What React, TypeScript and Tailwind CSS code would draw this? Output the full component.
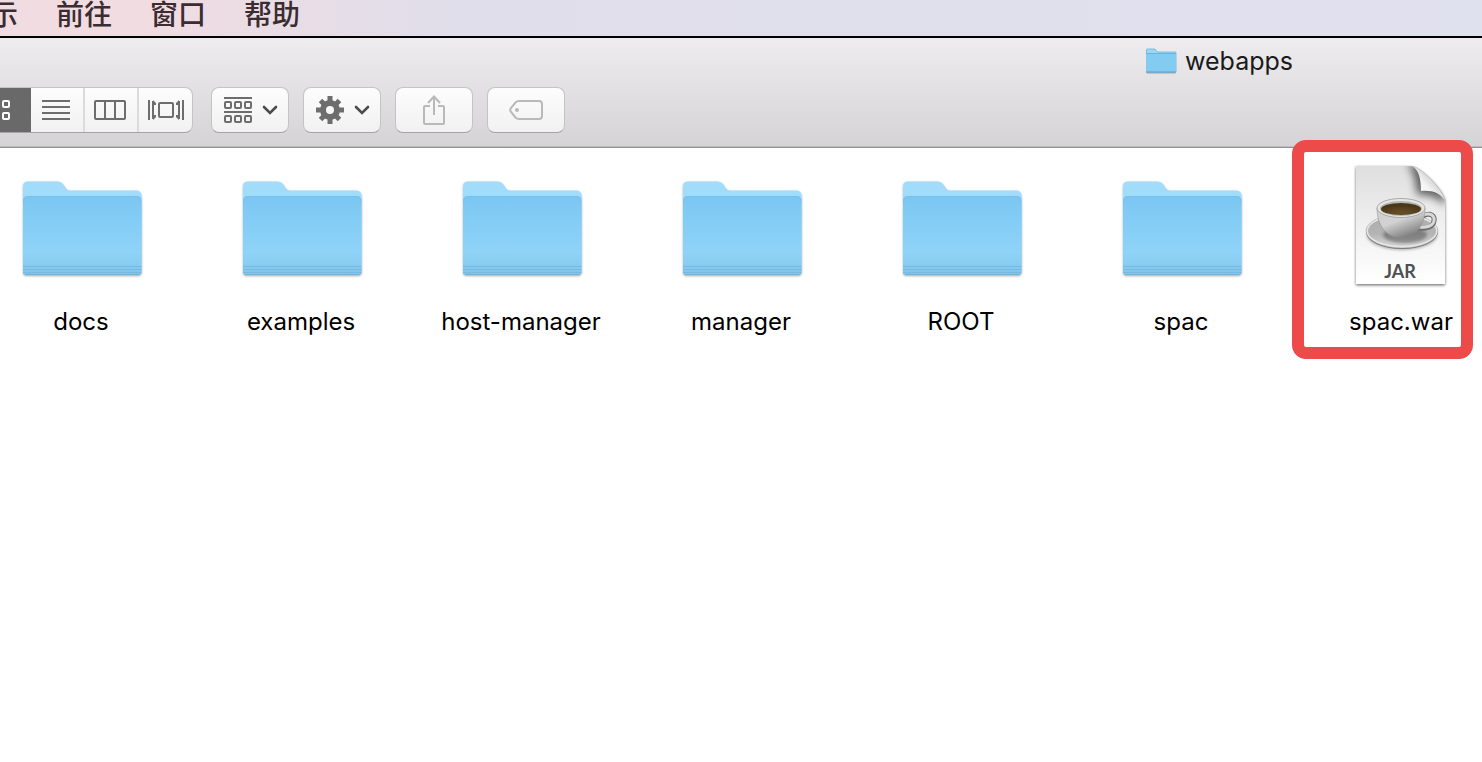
import React from 'react';

const FolderIcon = () => (
  <svg viewBox="0 0 128 128" className="w-32 h-32 drop-shadow-[0_1px_1px_rgba(0,0,0,0.3)]" aria-hidden="true">
    <defs>
      <linearGradient id="folder-front" x1="0" y1="0" x2="0" y2="1">
        <stop offset="0" stopColor="#7bc6f2" />
        <stop offset="0.35" stopColor="#84cdf6" />
        <stop offset="0.7" stopColor="#8fd3f7" />
        <stop offset="0.85" stopColor="#89cdf1" />
        <stop offset="1" stopColor="#7fc3e9" />
      </linearGradient>
    </defs>
    <path d="M6 109V24.500Q6 19.500 11 19.500H41Q44 19.500 46 22L49 26.500Q50.500 28.500 53 28.500H119Q124.500 28.500 124.500 34V109Z" fill="#a1dcfb" />
    <path d="M6 39Q6 34 11 34H119.500Q124.500 34 124.500 39V110Q124.500 113 121.500 113H9Q6 113 6 110Z" fill="url(#folder-front)" />
    <path d="M6.500 39.500Q6.500 34.500 11 34.500H119.500Q124 34.500 124 39.500" fill="none" stroke="#72bde6" strokeWidth="0.5" />
    <path d="M6 104.500H124.500M6 107.500H124.500M6 110.500H124.500" stroke="#75bae2" strokeWidth="1" />
    <path d="M8 112.700H122.500" stroke="#68a9cf" strokeWidth="0.7" />
  </svg>
);

const SmallFolderIcon = () => (
  <svg viewBox="0 0 32 26" className="w-8 h-[26px]" aria-hidden="true">
    <path d="M1.500 24V2Q1.500 1 2.500 1H10L12.500 4H30Q31 4 31 5V24Z" fill="#9bd8f8" stroke="#6bb2d8" strokeWidth="0.8" />
    <rect x="1" y="5.500" width="30" height="19" rx="0.8" fill="#84cbf2" />
    <path d="M1 5.500H31" stroke="#68b6df" strokeWidth="1" />
    <path d="M1 24H31" stroke="#5ba2c8" strokeWidth="1" />
    <path d="M1.500 25.200H30.500" stroke="#000" strokeOpacity="0.2" strokeWidth="1" />
  </svg>
);

const JarIcon = () => (
  <svg viewBox="0 0 128 128" className="w-32 h-32" aria-hidden="true">
    <defs>
      <linearGradient id="jar-page" x1="0" y1="0" x2="0" y2="1">
        <stop offset="0" stopColor="#dedede" />
        <stop offset="0.5" stopColor="#f0f0f0" />
        <stop offset="1" stopColor="#ffffff" />
      </linearGradient>
      <linearGradient id="jar-fold" x1="0" y1="1" x2="0.7" y2="0.3">
        <stop offset="0" stopColor="#ffffff" />
        <stop offset="0.6" stopColor="#f4f4f4" />
        <stop offset="1" stopColor="#c5c5c5" />
      </linearGradient>
      <linearGradient id="jar-cup" x1="0" y1="0" x2="0.6" y2="1">
        <stop offset="0" stopColor="#d0d0d0" />
        <stop offset="0.5" stopColor="#d2d2d2" />
        <stop offset="1" stopColor="#7c7c7c" />
      </linearGradient>
      <linearGradient id="jar-saucer" x1="0" y1="0" x2="0" y2="1">
        <stop offset="0" stopColor="#adadad" />
        <stop offset="0.6" stopColor="#b4b4b4" />
        <stop offset="1" stopColor="#d6d6d6" />
      </linearGradient>
      <radialGradient id="jar-coffee" cx="0.5" cy="0.8" r="0.6">
        <stop offset="0" stopColor="#6a5029" />
        <stop offset="1" stopColor="#4a3719" />
      </radialGradient>
      <filter id="jar-shadow" x="-10%" y="-10%" width="120%" height="120%">
        <feDropShadow dx="0" dy="1.200" stdDeviation="1.800" floodColor="#000" floodOpacity="0.6" />
      </filter>
      <filter id="jar-soft" x="-30%" y="-30%" width="160%" height="160%">
        <feGaussianBlur stdDeviation="1.500" />
      </filter>
      <filter id="jar-softer" x="-50%" y="-50%" width="200%" height="200%">
        <feGaussianBlur stdDeviation="4" />
      </filter>
      <clipPath id="jar-clip">
        <path d="M19 4H74C84 5 108 29 108 39V122H19Z" />
      </clipPath>
    </defs>
    <path d="M19 4H74C84 5 108 29 108 39V122H19Z" fill="url(#jar-page)" filter="url(#jar-shadow)" />
    <g clipPath="url(#jar-clip)">
      <path d="M70 2C78 9 79 22 80 33C93 32 102 36 108 44V30L82 2Z" fill="#000" opacity="0.6" filter="url(#jar-softer)" />
    </g>
    <path d="M76 4.500C82 9 84 17 84 29C95 28 104 31 108 39C108 30 86 6 76 4.500Z" fill="url(#jar-fold)" />
    <path d="M76 4.500C86 6 108 30 108 39" fill="none" stroke="#b0b0b0" strokeWidth="0.6" />
    <ellipse cx="65" cy="73" rx="35" ry="15" fill="#000" opacity="0.3" filter="url(#jar-soft)" />
    <ellipse cx="65" cy="70" rx="36" ry="17" fill="#777" />
    <ellipse cx="65" cy="69" rx="36" ry="17" fill="#e5e5e5" stroke="#999" strokeWidth="0.5" />
    <ellipse cx="65" cy="69" rx="34" ry="15" fill="url(#jar-saucer)" />
    <ellipse cx="68" cy="73" rx="22" ry="8" fill="#333" opacity="0.4" filter="url(#jar-soft)" />
    <path d="M86 54C94 50 98 54 97 59C96 65 89 67 81 66" fill="none" stroke="#6d6d6d" strokeWidth="5" />
    <path d="M86 53C94 50 98 54 97 59C96 64 89 66 82 65" fill="none" stroke="#d8d8d8" strokeWidth="3" />
    <path d="M40 46C40 63 49 76 64 76C79 76 88 63 88 46Z" fill="url(#jar-cup)" stroke="#888" strokeWidth="0.5" />
    <ellipse cx="64" cy="46" rx="24" ry="9.500" fill="#e6e6e6" stroke="#999" strokeWidth="0.8" />
    <ellipse cx="64" cy="46.500" rx="21" ry="7.500" fill="#b5b5b5" />
    <ellipse cx="64" cy="47" rx="20" ry="6" fill="url(#jar-coffee)" />
    <text x="63" y="116" textAnchor="middle" fontFamily="Lato, sans-serif" fontWeight="700" fontSize="18" fill="#4f4f4f">
      JAR
    </text>
  </svg>
);

const GridIcon = () => (
  <svg viewBox="0 0 20 20" className="w-5 h-5" fill="none" stroke="#fff" strokeWidth="2" aria-hidden="true">
    <rect x="1" y="1" width="6" height="6" rx="1" />
    <rect x="13" y="1" width="6" height="6" rx="1" />
    <rect x="1" y="13" width="6" height="6" rx="1" />
    <rect x="13" y="13" width="6" height="6" rx="1" />
  </svg>
);

const ListIcon = () => (
  <svg viewBox="0 0 28 20" className="w-7 h-5" stroke="#6d6d6d" strokeWidth="2" aria-hidden="true">
    <path d="M0 1H28M0 7H28M0 13H28M0 19H28" />
  </svg>
);

const ColumnsIcon = () => (
  <svg viewBox="0 0 32 20" className="w-8 h-5" fill="none" stroke="#6d6d6d" strokeWidth="2" aria-hidden="true">
    <rect x="1" y="1" width="30" height="18" rx="1" />
    <path d="M11 1V19M21 1V19" />
  </svg>
);

const CoverFlowIcon = () => (
  <svg viewBox="0 0 36 20" className="w-9 h-5" fill="none" stroke="#6d6d6d" strokeWidth="2" aria-hidden="true">
    <path d="M1 0V20M35 0V20" />
    <path d="M5 1V19M31 1V19" />
    <path d="M5 0L8 3V5H5ZM5 20L8 17V15H5ZM31 0L28 3V5H31ZM31 20L28 17V15H31Z" fill="#6d6d6d" stroke="none" />
    <rect x="11" y="3" width="14" height="14" rx="1" />
  </svg>
);

const ArrangeIcon = () => (
  <svg viewBox="0 0 28 26" className="w-7 h-[26px]" fill="none" stroke="#6d6d6d" strokeWidth="2" aria-hidden="true">
    <path d="M0 1H28M0 15H28" />
    <rect x="1" y="5" width="6" height="6" rx="1" />
    <rect x="11" y="5" width="6" height="6" rx="1" />
    <rect x="21" y="5" width="6" height="6" rx="1" />
    <rect x="1" y="19" width="6" height="6" rx="1" />
    <rect x="11" y="19" width="6" height="6" rx="1" />
    <rect x="21" y="19" width="6" height="6" rx="1" />
  </svg>
);

const GearIcon = () => (
  <svg viewBox="0 0 28 28" className="w-7 h-7" fill="none" stroke="#6d6d6d" aria-hidden="true">
    <circle cx="14" cy="14" r="7" strokeWidth="6" />
    <path
      d="M14 0V6M14 22V28M0 14H6M22 14H28M4.500 4.500L8.500 8.500M19.500 19.500L23.500 23.500M23.500 4.500L19.500 8.500M8.500 19.500L4.500 23.500"
      strokeWidth="5"
    />
  </svg>
);

const ChevronIcon = () => (
  <svg viewBox="0 0 16 10" className="w-4 h-[10px]" fill="none" stroke="#4c4c4c" strokeWidth="2.600" aria-hidden="true">
    <path d="M2 2L8 8L14 2" strokeLinecap="round" />
  </svg>
);

const ShareIcon = () => (
  <svg viewBox="0 0 22 30" className="w-[22px] h-[30px]" fill="none" stroke="#b9b9b9" strokeWidth="2" aria-hidden="true">
    <path d="M7 11H2Q1 11 1 12V28Q1 29 2 29H20Q21 29 21 28V12Q21 11 20 11H15" />
    <path d="M11 20V2M5 8L11 1.500L17 8" />
  </svg>
);

const TagIcon = () => (
  <svg viewBox="0 0 34 20" className="w-[34px] h-5" fill="none" stroke="#b9b9b9" strokeWidth="2" aria-hidden="true">
    <path d="M10 1H30Q33 1 33 4V16Q33 19 30 19H10Q8 19 6.500 17.500L2 12Q0.500 10 2 8L6.500 2.500Q8 1 10 1Z" />
    <circle cx="8" cy="10" r="2" fill="#b9b9b9" stroke="none" />
  </svg>
);

const buttonClass =
  'flex h-[46px] w-[78px] items-center justify-center rounded-lg border border-[#c5c4c5] border-b-[#a5a4a5] bg-linear-to-b from-[#fdfdfd] to-[#f1f1f1]';

const App = () => {
  const menus = ['显示', '前往', '窗口', '帮助'];

  const files = [
    { name: 'docs' },
    { name: 'examples' },
    { name: 'host-manager' },
    { name: 'manager' },
    { name: 'ROOT' },
    { name: 'spac' },
    { name: 'spac.war', jar: true, marked: true }
  ];

  return (
    <div className="min-h-screen overflow-hidden bg-white font-['Inter','Noto_Sans_CJK_SC',sans-serif] text-black">
      {/* Menu bar */}
      <nav className="-ml-[38px] flex h-[38px] items-start gap-[38px] border-b-2 border-black bg-linear-to-r from-[#f0dce1] from-12% via-[#e0deea] via-32% to-[#e0e1ef]">
        {menus.map((menu) => (
          <button key={menu} className="shrink-0 font-['Noto_Sans_CJK_SC',sans-serif] text-[28px] leading-[26px] font-medium text-[#3a2c30]">
            {menu}
          </button>
        ))}
      </nav>

      {/* Window header */}
      <header className="border-b border-[#929192] bg-linear-to-b from-[#eeecee] to-[#d5d3d5] pb-[14px] shadow-[inset_0_-1px_0_#bfbebf]">
        <div className="mb-1 flex h-[45px] items-center justify-end gap-2 pr-[189px]">
          <SmallFolderIcon />
          <h1 className="text-[25px] leading-8 text-[#1b1a1b]">webapps</h1>
        </div>

        <div className="-ml-[39px] flex">
          <div className="mr-[18px] flex h-[46px] overflow-hidden rounded-lg border-r border-b border-t border-[#c5c4c5] border-b-[#a5a4a5] bg-linear-to-b from-[#fdfdfd] to-[#f1f1f1]">
            <button aria-label="Icon view" className="flex w-[70px] items-center justify-end bg-[#6a696a] pr-[21px]">
              <GridIcon />
            </button>
            <button aria-label="List view" className="flex w-[54px] items-center justify-center border-r-2 border-[#dbdbdb] pr-0.5">
              <ListIcon />
            </button>
            <button aria-label="Column view" className="flex w-[54px] items-center justify-center border-r-2 border-[#dbdbdb] pr-0.5">
              <ColumnsIcon />
            </button>
            <button aria-label="Cover flow view" className="flex w-[53px] items-center justify-center">
              <CoverFlowIcon />
            </button>
          </div>
          <div className="flex gap-[14px]">
            <button aria-label="Arrange" className={`${buttonClass} gap-[10px] pl-0.5`}>
              <ArrangeIcon />
              <ChevronIcon />
            </button>
            <button aria-label="Actions" className={`${buttonClass} gap-[10px] pl-0.5`}>
              <GearIcon />
              <ChevronIcon />
            </button>
            <button aria-label="Share" className={buttonClass}>
              <ShareIcon />
            </button>
            <button aria-label="Tags" className={buttonClass}>
              <TagIcon />
            </button>
          </div>
        </div>
      </header>

      {/* Files */}
      <main className="-ml-[29px] flex">
        {files.map((file) => (
          <div key={file.name} className="relative flex w-[220px] shrink-0 flex-col items-center pt-[14px]">
            {file.jar ? <JarIcon /> : <FolderIcon />}
            <p className="mt-4 text-2xl leading-8">{file.name}</p>
            {file.marked && (
              <div className="absolute -top-2 left-px h-[219px] w-[181px] rounded-[14px] border-12 border-[#ed4b49]"></div>
            )}
          </div>
        ))}
      </main>
    </div>
  );
};

export default App;
